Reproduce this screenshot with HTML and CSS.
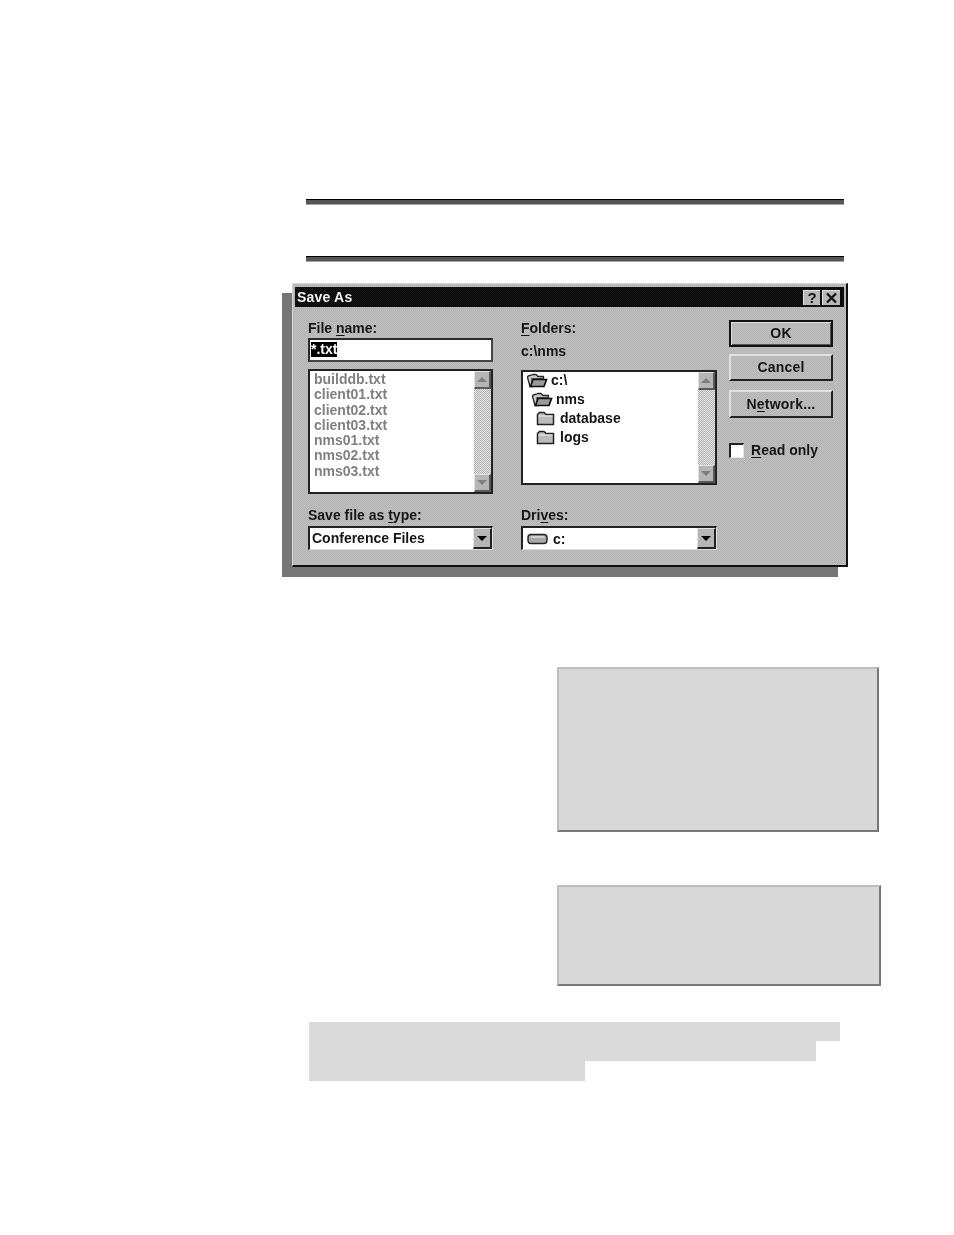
FILE: index.html
```html
<!DOCTYPE html>
<html lang="en">
<head>
<meta charset="utf-8">
<title>Save As</title>
<link rel="stylesheet" href="styles.css">
</head>
<body>
<main class="page">
  <div class="rule rule-first"></div>
  <div class="rule rule-second"></div>

  <section class="dialog">
    <header class="titlebar">
      <span class="title">Save As</span>
      <span class="title-buttons">
        <span class="title-btn">?</span>
        <span class="title-btn title-close">
          <svg width="13" height="12" viewBox="0 0 13 12"><path d="M2 1.5 L11 10.5 M11 1.5 L2 10.5" stroke="#111" stroke-width="2.4" fill="none"/></svg>
        </span>
      </span>
    </header>

    <div class="dialog-body">
      <div class="col col-file">
        <div class="label"><span>File <u>n</u>ame:</span></div>
        <div class="input"><span class="selected">*.txt</span></div>
        <div class="listbox listbox-file">
          <ul class="files">
            <li>builddb.txt</li>
            <li>client01.txt</li>
            <li>client02.txt</li>
            <li>client03.txt</li>
            <li>nms01.txt</li>
            <li>nms02.txt</li>
            <li>nms03.txt</li>
          </ul>
          <div class="scrollbar">
            <span class="scroll-btn"><i class="arrow-up"></i></span>
            <span class="scroll-btn"><i class="arrow-down"></i></span>
          </div>
        </div>
        <div class="label label-bottom"><span>Save file as <u>t</u>ype:</span></div>
        <div class="combo">
          <span class="combo-text">Conference Files</span>
          <span class="combo-btn"><i class="arrow-black"></i></span>
        </div>
      </div>

      <div class="col col-folder">
        <div class="label"><span><u>F</u>olders:</span></div>
        <div class="path">c:\nms</div>
        <div class="listbox listbox-folder">
          <ul class="folders">
            <li class="lvl-0">
              <svg class="folder" width="22" height="15" viewBox="0 0 22 15"><path d="M4 13.5 L1.5 4.5 Q1.5 2.5 4 2.5 L7 1.5 L10 1.5 L12 3.5 L17.5 3.5 L17.5 6 L6 6 L7 13.5 Z" fill="#c8c8c8" stroke="#222" stroke-width="1.3"/><path d="M4.5 13.5 L7 6.5 L20.5 6.5 L18 13.5 Z" fill="#9a9a9a" stroke="#111" stroke-width="1.7"/></svg>
              <span>c:\</span>
            </li>
            <li class="lvl-1">
              <svg class="folder" width="22" height="15" viewBox="0 0 22 15"><path d="M4 13.5 L1.5 4.5 Q1.5 2.5 4 2.5 L7 1.5 L10 1.5 L12 3.5 L17.5 3.5 L17.5 6 L6 6 L7 13.5 Z" fill="#c8c8c8" stroke="#222" stroke-width="1.3"/><path d="M4.5 13.5 L7 6.5 L20.5 6.5 L18 13.5 Z" fill="#9a9a9a" stroke="#111" stroke-width="1.7"/></svg>
              <span>nms</span>
            </li>
            <li class="lvl-2">
              <svg class="folder" width="19" height="15" viewBox="0 0 19 15"><path d="M1.5 13.5 L1.5 3.5 L3.5 1.5 L8 1.5 L10 3.5 L17.5 3.5 L17.5 13.5 Z" fill="#bcbcbc" stroke="#222" stroke-width="1.5"/><path d="M2.5 5 H16.5" stroke="#efefef" stroke-width="1"/></svg>
              <span>database</span>
            </li>
            <li class="lvl-2">
              <svg class="folder" width="19" height="15" viewBox="0 0 19 15"><path d="M1.5 13.5 L1.5 3.5 L3.5 1.5 L8 1.5 L10 3.5 L17.5 3.5 L17.5 13.5 Z" fill="#bcbcbc" stroke="#222" stroke-width="1.5"/><path d="M2.5 5 H16.5" stroke="#efefef" stroke-width="1"/></svg>
              <span>logs</span>
            </li>
          </ul>
          <div class="scrollbar">
            <span class="scroll-btn"><i class="arrow-up"></i></span>
            <span class="scroll-btn"><i class="arrow-down"></i></span>
          </div>
        </div>
        <div class="label label-drives"><span>Dri<u>v</u>es:</span></div>
        <div class="combo">
          <span class="combo-text combo-drive">
            <svg width="21" height="12" viewBox="0 0 21 12"><rect x="1" y="1.5" width="19" height="9" rx="3" fill="#a8a8a8" stroke="#222" stroke-width="1.4"/><path d="M3.5 4 H17.5" stroke="#eee" stroke-width="1.2"/></svg>
            <span>c:</span>
          </span>
          <span class="combo-btn"><i class="arrow-black"></i></span>
        </div>
      </div>

      <div class="col col-actions">
        <div class="btn btn-default">OK</div>
        <div class="btn btn-cancel">Cancel</div>
        <div class="btn btn-network">N<u>e</u>twork...</div>
        <div class="check">
          <span class="checkbox"></span>
          <span><u>R</u>ead only</span>
        </div>
      </div>
    </div>
  </section>

  <div class="panel panel-first"></div>
  <div class="panel panel-second"></div>

  <div class="highlight">
    <div class="hl hl-1"></div>
    <div class="hl hl-2"></div>
    <div class="hl hl-3"></div>
  </div>
</main>
</body>
</html>
```
FILE: styles.css
```css
* { box-sizing: border-box; }
html, body { margin: 0; padding: 0; background: #fff; }
body { width: 954px; height: 1235px; overflow: hidden; font-family: "Liberation Sans", Arial, sans-serif; }
.page { display: flow-root; }
ul { list-style: none; margin: 0; padding: 0; }
u { text-underline-offset: 2px; text-decoration-thickness: 1px; }

.rule { width: 538px; height: 6px; margin-left: 306px; background: #555; border-top: 1px solid #000; border-bottom: 1px solid #a5a5a5; }
.rule-first { margin-top: 199px; }
.rule-second { margin-top: 51px; }

.dialog {
  width: 556px; height: 284px; margin: 21px 0 0 292px;
  display: flex; flex-direction: column;
  padding: 3px 2px 2px 2px;
  background: repeating-conic-gradient(#b4b4b4 0 25%, #bfbfbf 0 50%) 0 0 / 2px 2px;
  border-top: 1px solid #d8d8d8; border-left: 1px solid #d8d8d8;
  border-right: 2px solid #111; border-bottom: 2px solid #111;
  box-shadow: -10px 10px 0 #767676;
  color: #151515; font-weight: 700; font-size: 14px;
  filter: blur(.35px);
}
.titlebar {
  height: 20px; flex: none; display: flex; align-items: center; justify-content: space-between;
  background: repeating-conic-gradient(#000 0 25%, #1a1a1a 0 50%) 0 0 / 2px 2px;
  padding: 0 4px 0 2px;
}
.title { color: #f4f4f4; letter-spacing: .2px; }
.title-buttons { display: flex; gap: 2px; }
.title-btn {
  width: 17px; height: 15px; display: flex; align-items: center; justify-content: center;
  background: #b8b8b8; color: #111; font-size: 15px; font-weight: 700; line-height: 1;
  border-top: 1px solid #e4e4e4; border-left: 1px solid #e4e4e4;
}
.title-close { width: 18px; }

.dialog-body { flex: 1; display: flex; padding: 12px 0 0 13px; }
.col { display: flex; flex-direction: column; }
.col-file { width: 185px; }
.col-folder { width: 196px; margin-left: 28px; }
.col-actions { width: 104px; margin-left: 12px; margin-top: 1px; }

.label { height: 20px; line-height: 18px; }
.label-bottom { margin-top: 12px; height: 20px; }
.label-drives { margin-top: 21px; height: 20px; }
.path { height: 22px; line-height: 24px; }

.input {
  height: 24px; background: #fff; padding: 1px 0 0 1px; line-height: 16px;
  border: 2px solid #2a2a2a; border-right-color: #444; border-bottom-color: #444;
  margin-top: -1px;
}
.selected { display: inline-block; height: 15px; line-height: 15px; background: #000; color: #fff; }

.listbox {
  display: flex; justify-content: space-between; background: #fff;
  border: 2px solid #222;
}
.listbox-file { height: 125px; margin-top: 7px; }
.listbox-folder { height: 115px; margin-top: 9px; }
.files { padding: 0 0 0 4px; color: #808080; line-height: 15.25px; margin-top: 1px; font-size: 14px; }
.folders { padding: 0; line-height: 19px; margin-top: -1px; }
.folders li { display: flex; align-items: center; height: 19px; gap: 3px; }
.lvl-0 { padding-left: 3px; }
.lvl-1 { padding-left: 8px; }
.lvl-2 { padding-left: 13px; gap: 5px !important; }
.folder { flex: none; }

.scrollbar {
  width: 17px; flex: none; display: flex; flex-direction: column; justify-content: space-between;
  background: repeating-conic-gradient(#b5b5b5 0 25%, #e2e2e2 0 50%) 0 0 / 2px 2px;
}
.scroll-btn {
  height: 18px; display: flex; align-items: center; justify-content: center;
  background: #b6b6b6;
  border-top: 1px solid #e2e2e2; border-left: 1px solid #e2e2e2;
  border-right: 2px solid #5a5a5a; border-bottom: 2px solid #5a5a5a;
}
.arrow-up { width: 0; height: 0; border-left: 5px solid transparent; border-right: 5px solid transparent; border-bottom: 5px solid #7f7f7f; }
.arrow-down { width: 0; height: 0; border-left: 5px solid transparent; border-right: 5px solid transparent; border-top: 5px solid #7f7f7f; }
.arrow-black { width: 0; height: 0; border-left: 5px solid transparent; border-right: 5px solid transparent; border-top: 5px solid #000; }

.combo {
  height: 24px; display: flex; justify-content: space-between; background: #fff;
  border-top: 2px solid #222; border-left: 2px solid #222; border-right: 1px solid #ddd; border-bottom: 1px solid #ddd;
}
.combo-text { padding-left: 2px; line-height: 20px; white-space: nowrap; }
.combo-drive { display: flex; align-items: center; gap: 5px; padding-left: 4px; }
.combo-btn {
  width: 19px; height: 21px; flex: none; display: flex; align-items: center; justify-content: center;
  background: #b6b6b6;
  border-top: 1px solid #e2e2e2; border-left: 1px solid #e2e2e2;
  border-right: 2px solid #222; border-bottom: 2px solid #222;
}

.btn {
  display: flex; align-items: center; justify-content: center; padding-bottom: 1px;
  border-top: 2px solid #e0e0e0; border-left: 2px solid #e0e0e0;
  border-right: 2px solid #222; border-bottom: 2px solid #222;
  font-size: 14px; letter-spacing: .2px;
}
.btn-default { height: 27px; padding-bottom: 2px; border: 2px solid #111; box-shadow: inset 1px 1px 0 #ddd, inset -1px -1px 0 #555; }
.btn-cancel { height: 27px; margin-top: 7px; }
.btn-network { height: 28px; margin-top: 9px; }
.check { display: flex; align-items: center; gap: 7px; margin-top: 24px; }
.checkbox {
  width: 15px; height: 15px; background: #fff;
  border-top: 2px solid #222; border-left: 2px solid #222;
  border-right: 1px solid #e4e4e4; border-bottom: 1px solid #e4e4e4;
}

.panel { margin-left: 557px; background: #d8d8d8; border-top: 2px solid #bdbdbd; border-left: 2px solid #bdbdbd; border-right: 2px solid #777; border-bottom: 2px solid #777; }
.panel-first { width: 322px; height: 165px; margin-top: 100px; }
.panel-second { width: 324px; height: 101px; margin-top: 53px; }

.highlight { margin: 36px 0 0 309px; }
.hl { background: #dadada; }
.hl-1 { width: 531px; height: 19px; }
.hl-2 { width: 507px; height: 20px; }
.hl-3 { width: 276px; height: 20px; }
```
